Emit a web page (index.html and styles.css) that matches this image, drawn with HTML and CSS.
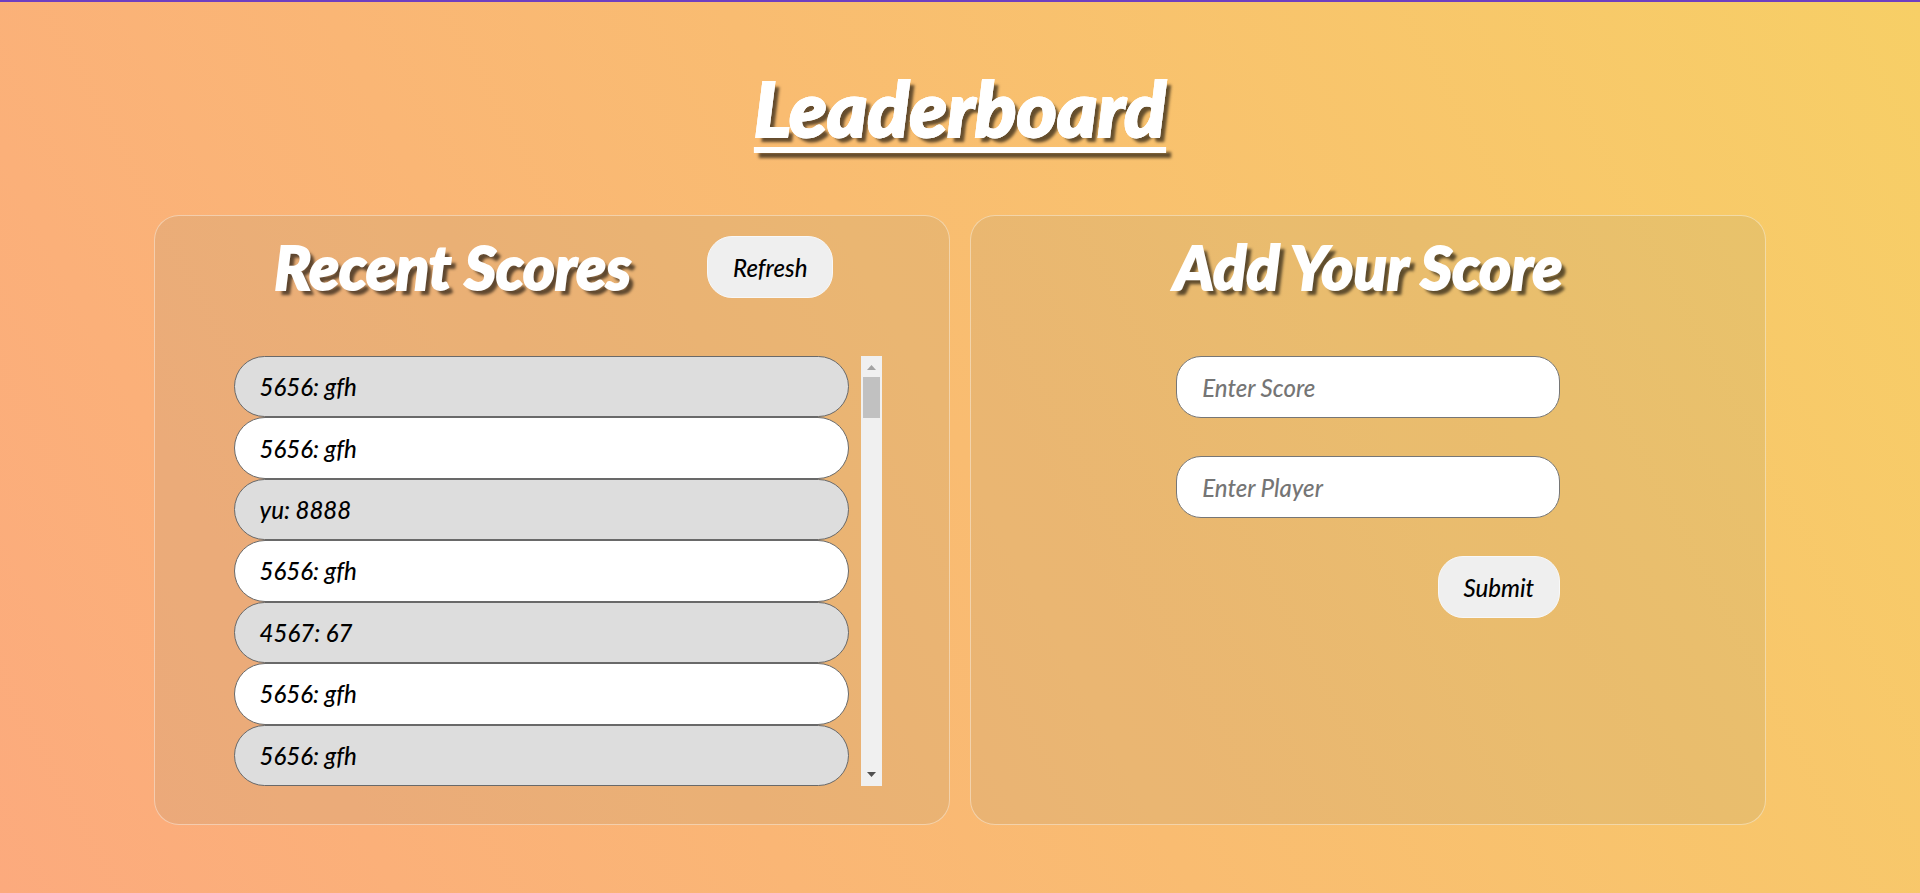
FILE: index.html
```html
<!DOCTYPE html>
<html lang="en">
<head>
<meta charset="utf-8">
<title>Leaderboard</title>
<link rel="stylesheet" href="styles.css">
</head>
<body>
<header class="page-header">
  <h1 class="title">Leaderboard</h1>
</header>
<main class="cards">
  <section class="card">
    <div class="card-head">
      <h2 class="card-title">Recent Scores</h2>
      <button class="btn" type="button">Refresh</button>
    </div>
    <div class="scores">
      <ul class="score-list">
        <li class="score">5656: gfh</li>
        <li class="score">5656: gfh</li>
        <li class="score">yu: 8888</li>
        <li class="score">5656: gfh</li>
        <li class="score">4567: 67</li>
        <li class="score">5656: gfh</li>
        <li class="score">5656: gfh</li>
      </ul>
      <div class="scrollbar" aria-hidden="true">
        <svg class="arrow arrow-up" viewBox="0 0 21 21"><path d="M6 14h9L10.5 9z"/></svg>
        <div class="thumb"></div>
        <svg class="arrow arrow-down" viewBox="0 0 21 21"><path d="M6 7h9l-4.500 5z"/></svg>
      </div>
    </div>
  </section>
  <section class="card">
    <div class="card-head">
      <h2 class="card-title">Add Your Score</h2>
    </div>
    <form class="form">
      <input class="field" type="text" placeholder="Enter Score" aria-label="Enter Score">
      <input class="field" type="text" placeholder="Enter Player" aria-label="Enter Player">
      <button class="btn submit" type="button">Submit</button>
    </form>
  </section>
</main>
</body>
</html>
```
FILE: styles.css
```css
* {
  box-sizing: border-box;
}

body {
  margin: 0;
  min-height: 100vh;
  border-top: 2px solid #6f3fc0;
  background: linear-gradient(62deg, #fcaa7d, #f9bc71 50%, #f7cf66) no-repeat;
  font-family: Lato, "Open Sans", sans-serif;
  font-style: italic;
  font-weight: 500;
  font-size: 24px;
  font-variant-ligatures: none;
  color: #000;
}

.page-header {
  padding: 57px 0 60px;
  text-align: center;
}

.title,
.card-title {
  margin: 0;
  color: #fff;
  font-weight: 900;
  white-space: nowrap;
  -webkit-text-stroke: 2px #fff;
  text-shadow: 5px 5px 3px rgba(0, 0, 0, 0.6);
}

.title {
  font-size: 77px;
  line-height: 96px;
  text-decoration: underline;
  text-decoration-thickness: 6px;
  text-decoration-skip-ink: none;
  text-underline-offset: 10px;
}

.card-title {
  font-size: 61px;
  line-height: 62px;
}

.cards {
  display: grid;
  grid-template-columns: 1fr 1fr;
  gap: 20px;
  padding: 0 8%;
}

.card {
  padding: 20px 67px 38px 79px;
  border: 1px solid rgba(255, 255, 255, 0.4);
  border-radius: 25px;
  background: rgba(145, 146, 120, 0.15);
}

.card-head {
  display: flex;
  justify-content: center;
  align-items: center;
  gap: 76px;
  margin: 0 8px 58px 0;
}

.card:last-child {
  padding-right: 79px;
}

.card:last-child .card-head {
  margin-right: 0;
}

.btn,
.field {
  height: 62px;
  padding: 0 25px;
  border-radius: 25px;
  font: inherit;
}

.btn {
  border: 1px solid #f8f8f8;
  background: #efefef;
  color: #000;
}

.scores {
  display: flex;
  gap: 12px;
  height: 430px;
}

.score-list {
  flex: 1;
  display: flex;
  flex-direction: column;
  margin: 0;
  padding: 0;
  list-style: none;
}

.score {
  flex: 1;
  display: flex;
  align-items: center;
  padding: 0 25px;
  border: 1px solid #696969;
  border-radius: 31px;
  background: #fff;
}

.score:nth-child(odd) {
  background: #ddd;
}

.scrollbar {
  display: flex;
  flex-direction: column;
  width: 21px;
  background: #f0f0f0;
}

.arrow {
  width: 21px;
  height: 21px;
}

.arrow-up {
  fill: #a3a3a3;
}

.arrow-down {
  margin-top: auto;
  fill: #505050;
}

.thumb {
  height: 41px;
  margin: 0 2px;
  background: #c1c1c1;
}

.form {
  display: flex;
  flex-direction: column;
  align-items: center;
  gap: 38px;
  width: 384px;
  max-width: 100%;
  margin: 0 auto;
}

.field {
  width: 100%;
  border: 1px solid #767676;
  background: #fff;
}

.field::placeholder {
  color: #757575;
  opacity: 1;
}

.submit {
  align-self: flex-end;
}
```
